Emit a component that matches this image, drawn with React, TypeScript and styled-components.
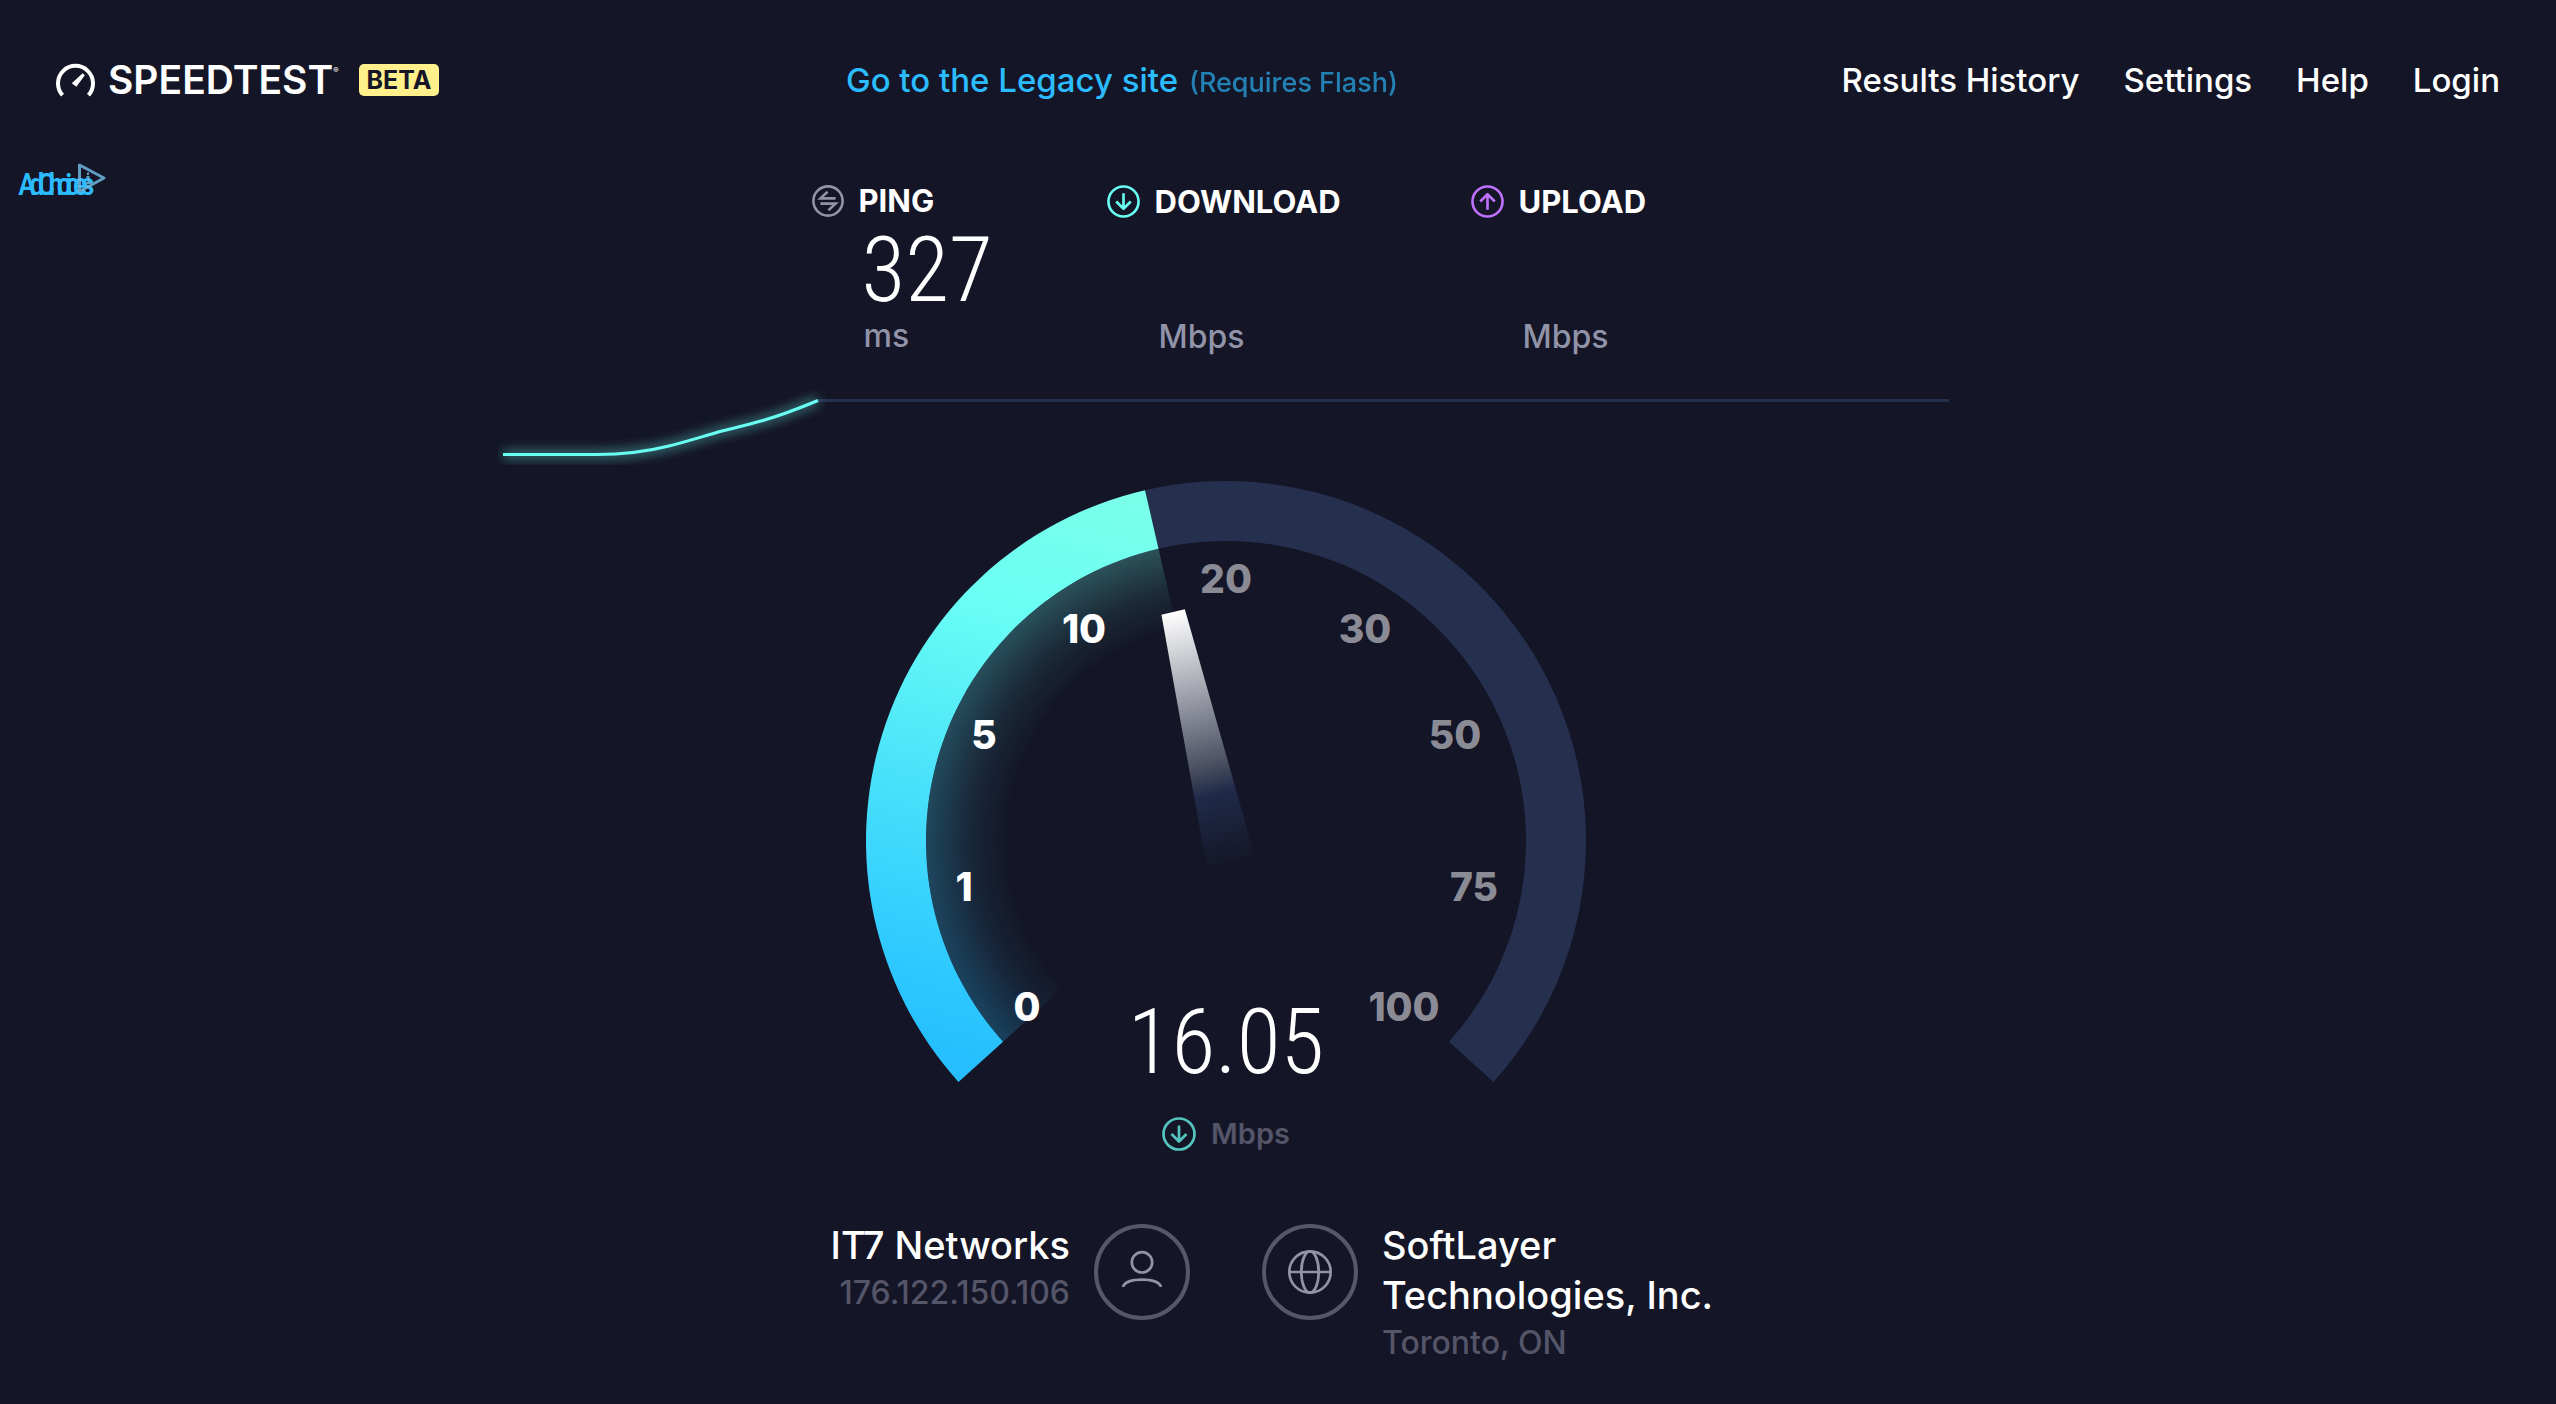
import React from "react";
import styled, { createGlobalStyle } from "styled-components";

const colors = {
  page: "#141526",
  text: "#ffffff",
  muted: "#9193a8",
  dim: "#545569",
  ring: "#56576b",
  link: "#2bbcff",
  track: "#25304f",
  tickOff: "#8b8b95",
  download: "#6afff3",
  upload: "#bf71ff",
};

const GlobalStyle = createGlobalStyle`
  * { box-sizing: border-box; }
  body {
    margin: 0;
    background: ${colors.page};
    color: ${colors.text};
    font-family: Inter, "Liberation Sans", sans-serif;
    font-weight: 500;
  }
  a { color: inherit; text-decoration: none; }
  svg { display: block; flex: none; }
`;

const Header = styled.header`
  display: grid;
  grid-template-columns: 32fr 67fr;
  align-items: center;
  height: 160px;
  padding: 0 56px;
`;

const Brand = styled.a`
  display: flex;
  align-items: center;
`;

const BrandName = styled.span`
  display: flex;
  margin-left: 12px;
  font-size: 39px;
  line-height: 40px;
  font-weight: 600;
`;

const Registered = styled.sup`
  font-size: 8px;
  line-height: 20px;
`;

const Badge = styled.span`
  margin-left: 20px;
  padding: 0 8px;
  border-radius: 5px;
  background: #fff08c;
  color: ${colors.page};
  font-size: 25px;
  line-height: 32px;
  font-weight: 700;
`;

const HeaderLinks = styled.div`
  display: flex;
  justify-content: space-between;
  align-items: baseline;
  padding-top: 2px;
`;

const LegacyLink = styled.a`
  color: ${colors.link};
  font-size: 33px;
  line-height: 40px;
`;

const LegacyNote = styled.span`
  margin-left: 2px;
  font-size: 27px;
  opacity: 0.65;
`;

const Nav = styled.nav`
  display: flex;
  gap: 44px;
  font-size: 33px;
  line-height: 40px;
`;

const Body = styled.div`
  display: grid;
  grid-template-columns: 104px minmax(0, 1fr) 208px;
`;

const AdChoices = styled.a`
  position: relative;
  display: block;
  align-self: start;
  height: 40px;
  padding-left: 18px;
  white-space: nowrap;
  color: ${colors.link};
  font-family: "Roboto Condensed", Roboto, sans-serif;
  font-size: 31px;
  line-height: 50px;
  font-weight: 500;
`;

const AdLetter = styled.span`
  display: inline-block;
  margin-right: -7px;
`;

const AdIcon = styled.svg`
  position: absolute;
  left: 77px;
  top: 2px;
`;

const Stage = styled.main`
  display: flex;
  flex-direction: column;
  align-items: center;
  padding-top: 25px;
`;

const Metrics = styled.section`
  display: grid;
  grid-template-columns: 295px 364px 170px;
`;

const MetricTitle = styled.h2`
  display: flex;
  align-items: center;
  gap: 15px;
  margin: 0;
  font-size: 31px;
  line-height: 32px;
  font-weight: 700;
`;

const BigNumber = styled.div`
  font-family: "Roboto Condensed", Roboto, sans-serif;
  font-size: 90px;
  line-height: 80px;
  font-weight: 300;
`;

const MetricValue = styled(BigNumber)`
  height: 99px;
  padding: 14px 0 0 50px;
`;

const MetricUnit = styled.div`
  padding-left: 52px;
  color: ${colors.muted};
  font-size: 32px;
  line-height: 40px;
`;

const Graph = styled.svg`
  width: 1456px;
  max-width: 100%;
  height: 80px;
  margin-top: 28px;
`;

const Gauge = styled.section`
  position: relative;
  width: 720px;
  height: 602px;
  margin-top: 16px;
`;

const Tick = styled.span<{ $x: number; $y: number; $on: boolean }>`
  position: absolute;
  left: ${(p) => p.$x}px;
  top: ${(p) => p.$y}px;
  transform: translate(-50%, -50%);
  color: ${(p) => (p.$on ? colors.text : colors.tickOff)};
  font-size: 39px;
  line-height: 40px;
  font-weight: 800;
`;

const Reading = styled(BigNumber)`
  position: absolute;
  left: 0;
  right: 0;
  bottom: 0;
  text-align: center;
`;

const ReadingUnit = styled.div`
  display: flex;
  align-items: center;
  gap: 15px;
  margin-top: 31px;
  color: ${colors.dim};
  font-size: 29px;
  line-height: 40px;
  font-weight: 600;

  svg { opacity: 0.75; }
`;

const Hosts = styled.footer`
  display: grid;
  grid-template-columns: 1fr 1fr;
  gap: 72px;
  align-self: stretch;
  margin-top: 66px;
`;

const Host = styled.div<{ $reverse?: boolean }>`
  display: flex;
  flex-direction: ${(p) => (p.$reverse ? "row-reverse" : "row")};
  gap: 24px;
  text-align: ${(p) => (p.$reverse ? "right" : "left")};

  svg { margin-top: 4px; }
`;

const HostName = styled.div`
  max-width: 360px;
  font-size: 38px;
  line-height: 50px;
`;

const HostDetail = styled.div`
  color: ${colors.dim};
  font-size: 32px;
  line-height: 46px;
`;

const CENTER = 360;
const OUTER = 360;
const INNER = 300;
const GLOW = 215;
const START = -132;
const END = 132;
const NEEDLE = -13;

function point(radius: number, angle: number) {
  const a = (angle * Math.PI) / 180;
  return `${(CENTER + radius * Math.sin(a)).toFixed(2)} ${(CENTER - radius * Math.cos(a)).toFixed(2)}`;
}

function band(outer: number, inner: number, from: number, to: number) {
  const large = to - from > 180 ? 1 : 0;
  return [
    `M${point(outer, from)}`,
    `A${outer} ${outer} 0 ${large} 1 ${point(outer, to)}`,
    `L${point(inner, to)}`,
    `A${inner} ${inner} 0 ${large} 0 ${point(inner, from)}`,
    "Z",
  ].join(" ");
}

const ticks = [
  { label: "0", x: 161, y: 526, on: true },
  { label: "1", x: 98, y: 406, on: true },
  { label: "5", x: 118, y: 254, on: true },
  { label: "10", x: 218, y: 148, on: true },
  { label: "20", x: 360, y: 98, on: false },
  { label: "30", x: 499, y: 148, on: false },
  { label: "50", x: 589, y: 254, on: false },
  { label: "75", x: 608, y: 406, on: false },
  { label: "100", x: 538, y: 526, on: false },
];

function LogoMark() {
  return (
    <svg width="40" height="36" viewBox="0 0 40 36" aria-hidden="true">
      <path d="M6.6 33.2A17.5 17.5 0 1 1 32.4 33.2" fill="none" stroke="#fff" strokeWidth="4" />
      <path d="M26.6 11.2 28.8 13.2 20.4 24.8 15.8 21.2Z" fill="#fff" />
    </svg>
  );
}

function PingIcon() {
  return (
    <svg width="32" height="32" viewBox="0 0 32 32" fill="none" stroke={colors.muted} strokeWidth="2.6" aria-hidden="true">
      <circle cx="16" cy="16" r="14.6" />
      <path d="M15.6 6.8 8.4 13.4H23.6M8.4 18.6H23.6L16.4 25.2" />
    </svg>
  );
}

function ArrowIcon({ color, up, size = 33 }: { color: string; up?: boolean; size?: number }) {
  return (
    <svg width={size} height={size} viewBox="0 0 34 34" fill="none" stroke={color} strokeWidth="2.7" aria-hidden="true">
      <circle cx="17" cy="17" r="15.5" />
      <path
        d={up ? "M17 25.5V10M9.5 17 17 9.5 24.5 17" : "M17 8.5V24M9.5 17 17 24.5 24.5 17"}
        strokeLinejoin="round"
      />
    </svg>
  );
}

function UserIcon() {
  return (
    <svg width="96" height="96" viewBox="0 0 96 96" fill="none" stroke={colors.muted} strokeWidth="2.7" aria-hidden="true">
      <circle cx="48" cy="48" r="46" stroke={colors.ring} strokeWidth="4" />
      <circle cx="48" cy="38.3" r="10.2" />
      <path d="M29.3 63V62C31.5 57.5 39 55.6 48 55.6S64.5 57.5 66.7 62V63" />
    </svg>
  );
}

function GlobeIcon() {
  return (
    <svg width="96" height="96" viewBox="0 0 96 96" fill="none" stroke={colors.muted} strokeWidth="2.7" aria-hidden="true">
      <circle cx="48" cy="48" r="46" stroke={colors.ring} strokeWidth="4" />
      <circle cx="48" cy="48" r="20.7" />
      <ellipse cx="48" cy="48" rx="8.7" ry="20.7" />
      <path d="M27.5 48H68.5" />
    </svg>
  );
}

function SpeedGraph() {
  const curve = "M5 69.5H99C123 69.5 147 67 171 61C189 56.5 206 51 224 46C238 42.5 251 39.5 265 35.5C284 30 302 23 320 15.5";
  return (
    <Graph viewBox="0 0 1456 80" role="img" aria-label="Download speed over time">
      <defs>
        <filter id="glow" x="-10%" y="-60%" width="120%" height="220%">
          <feGaussianBlur stdDeviation="6" />
        </filter>
      </defs>
      <path d="M320 15.5H1451" stroke={colors.track} strokeWidth="3" />
      <path d={curve} fill="none" stroke={colors.download} strokeWidth="7" opacity="0.5" filter="url(#glow)" />
      <path d={curve} fill="none" stroke={colors.download} strokeWidth="3" />
    </Graph>
  );
}

function GaugeDial() {
  return (
    <svg width="720" height="602" viewBox="0 0 720 602" role="img" aria-label="Speed gauge">
      <defs>
        <linearGradient id="value" gradientUnits="userSpaceOnUse" x1="120" y1="600" x2="270" y2="20">
          <stop offset="0" stopColor="#25bdff" />
          <stop offset="0.15" stopColor="#2dc8ff" />
          <stop offset="0.42" stopColor="#46defb" />
          <stop offset="0.78" stopColor="#6afff4" />
          <stop offset="1" stopColor="#7affea" />
        </linearGradient>
        <radialGradient id="fade" gradientUnits="userSpaceOnUse" cx={CENTER} cy={CENTER} r={INNER}>
          <stop offset={GLOW / INNER} stopColor="#fff" stopOpacity="0" />
          <stop offset="0.85" stopColor="#fff" stopOpacity="0.09" />
          <stop offset="1" stopColor="#fff" stopOpacity="0.26" />
        </radialGradient>
        <mask id="inner">
          <circle cx={CENTER} cy={CENTER} r={INNER} fill="url(#fade)" />
        </mask>
        <linearGradient id="needle" gradientUnits="userSpaceOnUse" x1="360" y1="125" x2="360" y2="388">
          <stop offset="0" stopColor="#ffffff" />
          <stop offset="0.62" stopColor="#43495c" />
          <stop offset="0.71" stopColor="#1f2a48" />
          <stop offset="1" stopColor="#1f2a48" stopOpacity="0" />
        </linearGradient>
      </defs>
      <path d={band(OUTER, INNER, NEEDLE, END)} fill={colors.track} />
      <path d={band(INNER, GLOW, START, NEEDLE)} fill="url(#value)" mask="url(#inner)" />
      <path d={band(OUTER, INNER, START, NEEDLE)} fill="url(#value)" />
      <path
        d="M348 125H372L385 388H335Z"
        fill="url(#needle)"
        transform={`rotate(${NEEDLE} ${CENTER} ${CENTER})`}
      />
    </svg>
  );
}

export default function App() {
  return (
    <>
      <GlobalStyle />
      <Header>
        <Brand href="#home">
          <LogoMark />
          <BrandName>
            SPEEDTEST<Registered>®</Registered>
          </BrandName>
          <Badge>BETA</Badge>
        </Brand>
        <HeaderLinks>
          <LegacyLink href="#legacy">
            Go to the Legacy site <LegacyNote>(Requires Flash)</LegacyNote>
          </LegacyLink>
          <Nav>
            <a href="#results">Results History</a>
            <a href="#settings">Settings</a>
            <a href="#help">Help</a>
            <a href="#login">Login</a>
          </Nav>
        </HeaderLinks>
      </Header>

      <Body>
        <AdChoices href="#adchoices">
          {"AdChoices".split("").map((letter, i) => (
            <AdLetter key={i}>{letter}</AdLetter>
          ))}
          <AdIcon width="30" height="32" viewBox="0 0 30 32" fill="none" stroke="#6fb4de" aria-hidden="true">
            <path d="M2.5 3 27 16 2.5 29.5Z" strokeWidth="3" strokeLinejoin="round" opacity="0.85" />
            <path d="M11 10.5V13M9.5 15H11.500V21M9 21H14" strokeWidth="2" opacity="0.85" />
          </AdIcon>
        </AdChoices>

        <Stage>
          <Metrics>
            <div>
              <MetricTitle>
                <PingIcon />
                PING
              </MetricTitle>
              <MetricValue>327</MetricValue>
              <MetricUnit>ms</MetricUnit>
            </div>
            <div>
              <MetricTitle>
                <ArrowIcon color={colors.download} />
                DOWNLOAD
              </MetricTitle>
              <MetricValue />
              <MetricUnit>Mbps</MetricUnit>
            </div>
            <div>
              <MetricTitle>
                <ArrowIcon color={colors.upload} up />
                UPLOAD
              </MetricTitle>
              <MetricValue />
              <MetricUnit>Mbps</MetricUnit>
            </div>
          </Metrics>

          <SpeedGraph />

          <Gauge>
            <GaugeDial />
            {ticks.map((t) => (
              <Tick key={t.label} $x={t.x} $y={t.y} $on={t.on}>
                {t.label}
              </Tick>
            ))}
            <Reading>16.05</Reading>
          </Gauge>
          <ReadingUnit>
            <ArrowIcon color={colors.download} size={34} />
            Mbps
          </ReadingUnit>

          <Hosts>
            <Host $reverse>
              <UserIcon />
              <div>
                <HostName>IT7 Networks</HostName>
                <HostDetail>176.122.150.106</HostDetail>
              </div>
            </Host>
            <Host>
              <GlobeIcon />
              <div>
                <HostName>SoftLayer Technologies, Inc.</HostName>
                <HostDetail>Toronto, ON</HostDetail>
              </div>
            </Host>
          </Hosts>
        </Stage>
      </Body>
    </>
  );
}
